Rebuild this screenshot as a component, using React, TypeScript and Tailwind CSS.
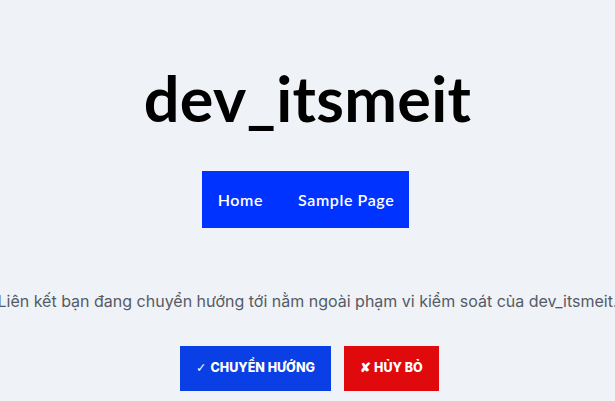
export default function App() {
  return (
    <div className="min-h-[401px] w-full overflow-hidden bg-[#eff2f6] flex flex-col items-center">
      {/* Site title */}
      <h1 className="mt-[57px] h-[80px] flex items-center text-[63px] font-bold leading-none text-black tracking-[0.3px] font-['Lato',sans-serif]">
        dev_itsmeit
      </h1>

      {/* Nav */}
      <nav className="mt-[34px] mr-[4px] h-[57px] bg-[#0033ff] flex items-center gap-[35px] pl-[16px] pr-[15px] font-['Lato',sans-serif] text-[16px] font-semibold text-white tracking-[0.6px]">
        <a>Home</a>
        <a>Sample Page</a>
      </nav>

      {/* Notice */}
      <p className="mt-[61px] whitespace-nowrap text-[16px] text-[#555b66] font-['Inter',sans-serif]">
        Liên kết bạn đang chuyển hướng tới nằm ngoài phạm vi kiểm soát của dev_itsmeit.
      </p>

      {/* Actions */}
      <div className="mt-[33px] ml-[4px] flex gap-[13px] font-['Inter',sans-serif] text-[12.5px] font-extrabold text-white">
        <button className="h-[45px] w-[151px] bg-[#0a3fe6] flex items-center justify-center uppercase">
          <span className="font-['DejaVu_Sans',sans-serif] font-normal mr-[4px]">✓</span>Chuyển hướng
        </button>
        <button className="h-[45px] w-[95px] bg-[#e0090b] flex items-center justify-center uppercase">
          ✘ Hủy bỏ
        </button>
      </div>
    </div>
  )
}
